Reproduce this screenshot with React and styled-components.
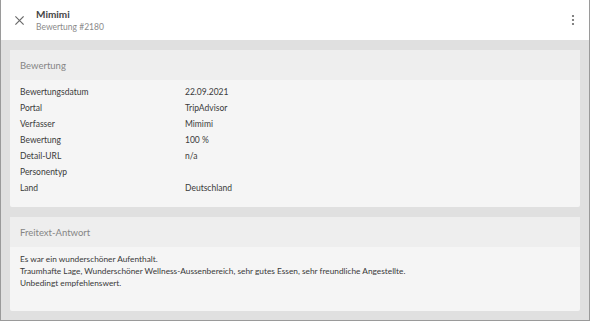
import React from 'react';
import styled, { createGlobalStyle } from 'styled-components';

const GlobalStyle = createGlobalStyle`
    html, body {
        margin: 0;
        padding: 0;
        background: #e0e0e0;
    }
    body {
        font-family: 'Lato', 'Noto Sans', sans-serif;
        color: #333;
    }
`;

const Frame = styled.div`
    width: 590px;
    height: 321px;
    box-sizing: border-box;
    border: 1px solid #9a9a9a;
    border-top: none;
    background: #e0e0e0;
    display: flex;
    flex-direction: column;
    overflow: hidden;
`;

const Header = styled.header`
    height: 40px;
    background: white;
    display: flex;
    align-items: center;
    padding: 0 10px 0 12px;
    flex-shrink: 0;
`;

const IconButton = styled.button`
    border: none;
    background: none;
    padding: 0;
    width: 12px;
    height: 14px;
    display: flex;
    align-items: center;
    justify-content: center;
`;

const TitleBlock = styled.div`
    display: flex;
    flex-direction: column;
    margin-left: 11px;
    flex: 1;
`;

const Title = styled.h1`
    margin: 0;
    font-size: 10px;
    font-weight: 700;
    line-height: 13px;
    color: #444;
`;

const Subtitle = styled.span`
    font-size: 8.5px;
    line-height: 12px;
    color: #8a8a8a;
`;

const Content = styled.main`
    flex: 1;
    display: flex;
    flex-direction: column;
    gap: 10px;
    padding: 10px 9px 0 9px;
`;

const Card = styled.section`
    background: #f5f5f5;
    border-radius: 2px;
    display: flex;
    flex-direction: column;
    height: ${p => p.height}px;
`;

const CardHeader = styled.h2`
    margin: 0;
    height: 30px;
    display: flex;
    align-items: center;
    padding: 0 10px;
    background: #eeeeee;
    font-size: 9.5px;
    font-weight: 400;
    color: #858585;
`;

const CardBody = styled.div`
    padding: ${p => p.padding};
`;

const Row = styled.div`
    display: grid;
    grid-template-columns: 165px 1fr;
    height: 16px;
    align-items: center;
    font-size: 8.5px;
    color: #3a3a3a;
`;

const Paragraph = styled.p`
    margin: 0;
    font-size: 8.3px;
    line-height: 12px;
    color: #3a3a3a;
`;

const CloseIcon = () => (
    <svg width="11" height="11" viewBox="0 0 24 24">
        <path d="M4 4 L20 20 M20 4 L4 20" stroke="#6a6a6a" strokeWidth="2.6" strokeLinecap="square" />
    </svg>
);

const MoreIcon = () => (
    <svg width="4" height="12" viewBox="0 0 4 12">
        <circle cx="2" cy="2" r="1.1" fill="#666" />
        <circle cx="2" cy="6" r="1.1" fill="#666" />
        <circle cx="2" cy="10" r="1.1" fill="#666" />
    </svg>
);

const rows = [
    ['Bewertungsdatum', '22.09.2021'],
    ['Portal', 'TripAdvisor'],
    ['Verfasser', 'Mimimi'],
    ['Bewertung', '100 %'],
    ['Detail-URL', 'n/a'],
    ['Personentyp', ''],
    ['Land', 'Deutschland'],
];

const App = () => {
    return (
        <Frame>
            <GlobalStyle />
            <Header>
                <IconButton><CloseIcon /></IconButton>
                <TitleBlock>
                    <Title>Mimimi</Title>
                    <Subtitle>Bewertung #2180</Subtitle>
                </TitleBlock>
                <IconButton><MoreIcon /></IconButton>
            </Header>
            <Content>
                <Card height={157}>
                    <CardHeader>Bewertung</CardHeader>
                    <CardBody padding="4px 10px">
                        {rows.map(([label, value]) => (
                            <Row key={label}>
                                <span>{label}</span>
                                <span>{value}</span>
                            </Row>
                        ))}
                    </CardBody>
                </Card>
                <Card height={94}>
                    <CardHeader>Freitext-Antwort</CardHeader>
                    <CardBody padding="6px 10px">
                        <Paragraph>Es war ein wunderschöner Aufenthalt.</Paragraph>
                        <Paragraph>Traumhafte Lage, Wunderschöner Wellness-Aussenbereich, sehr gutes Essen, sehr freundliche Angestellte.</Paragraph>
                        <Paragraph>Unbedingt empfehlenswert.</Paragraph>
                    </CardBody>
                </Card>
            </Content>
        </Frame>
    );
};

export default App;
